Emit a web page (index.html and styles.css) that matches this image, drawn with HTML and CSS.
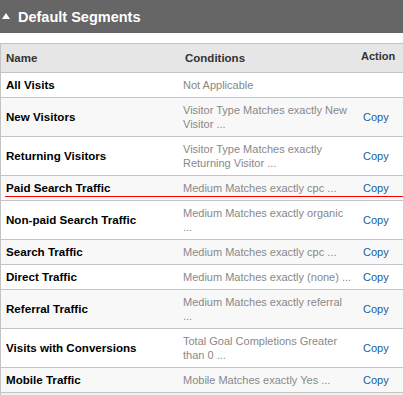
FILE: index.html
```html
<!DOCTYPE html>
<html lang="en">
<head>
    <meta charset="UTF-8">
    <title>Default Segments</title>
    <link rel="stylesheet" href="styles.css">
</head>
<body>

    <!-- Section header -->
    <div class="section-bar">
        <svg class="toggle" width="8" height="6" viewBox="0 0 8 6"><polygon points="4,0 8,6 0,6" fill="#fff"/></svg>
        <span>Default Segments</span>
    </div>

    <div class="segments">
        <table class="segment-table">
            <thead>
                <tr>
                    <th class="col-name">Name</th>
                    <th class="col-cond">Conditions</th>
                    <th class="col-action">Action</th>
                </tr>
            </thead>
            <tbody>
                <tr>
                    <td class="name">All Visits</td>
                    <td class="cond">Not Applicable</td>
                    <td class="action"></td>
                </tr>
                <tr class="alt">
                    <td class="name">New Visitors</td>
                    <td class="cond">Visitor Type Matches exactly New Visitor ...</td>
                    <td class="action"><a href="#">Copy</a></td>
                </tr>
                <tr>
                    <td class="name">Returning Visitors</td>
                    <td class="cond">Visitor Type Matches exactly Returning Visitor ...</td>
                    <td class="action"><a href="#">Copy</a></td>
                </tr>
                <tr class="alt marked">
                    <td class="name">Paid Search Traffic</td>
                    <td class="cond">Medium Matches exactly cpc ...</td>
                    <td class="action"><a href="#">Copy</a></td>
                </tr>
                <tr>
                    <td class="name">Non-paid Search Traffic</td>
                    <td class="cond">Medium Matches exactly organic ...</td>
                    <td class="action"><a href="#">Copy</a></td>
                </tr>
                <tr class="alt">
                    <td class="name">Search Traffic</td>
                    <td class="cond">Medium Matches exactly cpc ...</td>
                    <td class="action"><a href="#">Copy</a></td>
                </tr>
                <tr>
                    <td class="name">Direct Traffic</td>
                    <td class="cond">Medium Matches exactly (none) ...</td>
                    <td class="action"><a href="#">Copy</a></td>
                </tr>
                <tr class="alt">
                    <td class="name">Referral Traffic</td>
                    <td class="cond">Medium Matches exactly referral ...</td>
                    <td class="action"><a href="#">Copy</a></td>
                </tr>
                <tr>
                    <td class="name">Visits with Conversions</td>
                    <td class="cond">Total Goal Completions Greater than 0 ...</td>
                    <td class="action"><a href="#">Copy</a></td>
                </tr>
                <tr class="alt">
                    <td class="name">Mobile Traffic</td>
                    <td class="cond">Mobile Matches exactly Yes ...</td>
                    <td class="action"><a href="#">Copy</a></td>
                </tr>
            </tbody>
        </table>
        <div class="table-foot"></div>
    </div>

</body>
</html>
```

FILE: styles.css
```css
body {
    margin: 0;
    font-family: "Liberation Sans", Arial, sans-serif;
    font-size: 11px;
    background-color: #ffffff;
}

/* Dark section header */
.section-bar {
    height: 33px;
    background-color: #666666;
    color: #ffffff;
    font-size: 14.5px;
    font-weight: bold;
    display: flex;
    align-items: center;
    padding-left: 2px;
    gap: 8px;
}

.toggle {
    margin-top: -1px;
}

/* Segment table */
.segments {
    margin-top: 10px;
    border-left: 1px solid #c4c4c4;
}

.segment-table {
    width: 100%;
    border-collapse: collapse;
    table-layout: fixed;
    border-top: 1px solid #c4c4c4;
}

.segment-table th {
    background-color: #e6e6e6;
    text-align: left;
    font-size: 11.5px;
    font-weight: bold;
    color: #333;
    line-height: 28px;
    padding: 0;
    border-bottom: 1px solid #c4c4c4;
}

.segment-table th.col-name {
    width: 171px;
    padding-left: 5px;
}

.segment-table th.col-cond {
    width: 172px;
    padding-left: 8px;
}

.segment-table th.col-action {
    font-size: 11px;
    padding-left: 4px;
    vertical-align: top;
    line-height: 24px;
}

.segment-table td {
    padding: 5px 0 5px 6px;
    line-height: 14px;
    border-bottom: 1px solid #c4c4c4;
    vertical-align: middle;
}

.segment-table td.name {
    padding-left: 5px;
}

.segment-table td.cond {
    padding-right: 5px;
}

.segment-table tr.alt td {
    background-color: #f8f8f8;
}

.name {
    font-size: 11.6px;
    font-weight: bold;
    color: #000;
}

.cond {
    color: #888888;
}

.action a {
    color: #1a5e9e;
    text-decoration: none;
}

/* red mark under a row */
.marked td.name {
    position: relative;
}

.marked td.name::after {
    content: "";
    position: absolute;
    left: 4px;
    bottom: 3px;
    width: 399px;
    height: 1px;
    background-color: #ff0000;
}

.table-foot {
    height: 10px;
    background-color: #f0f0f0;
}
```
